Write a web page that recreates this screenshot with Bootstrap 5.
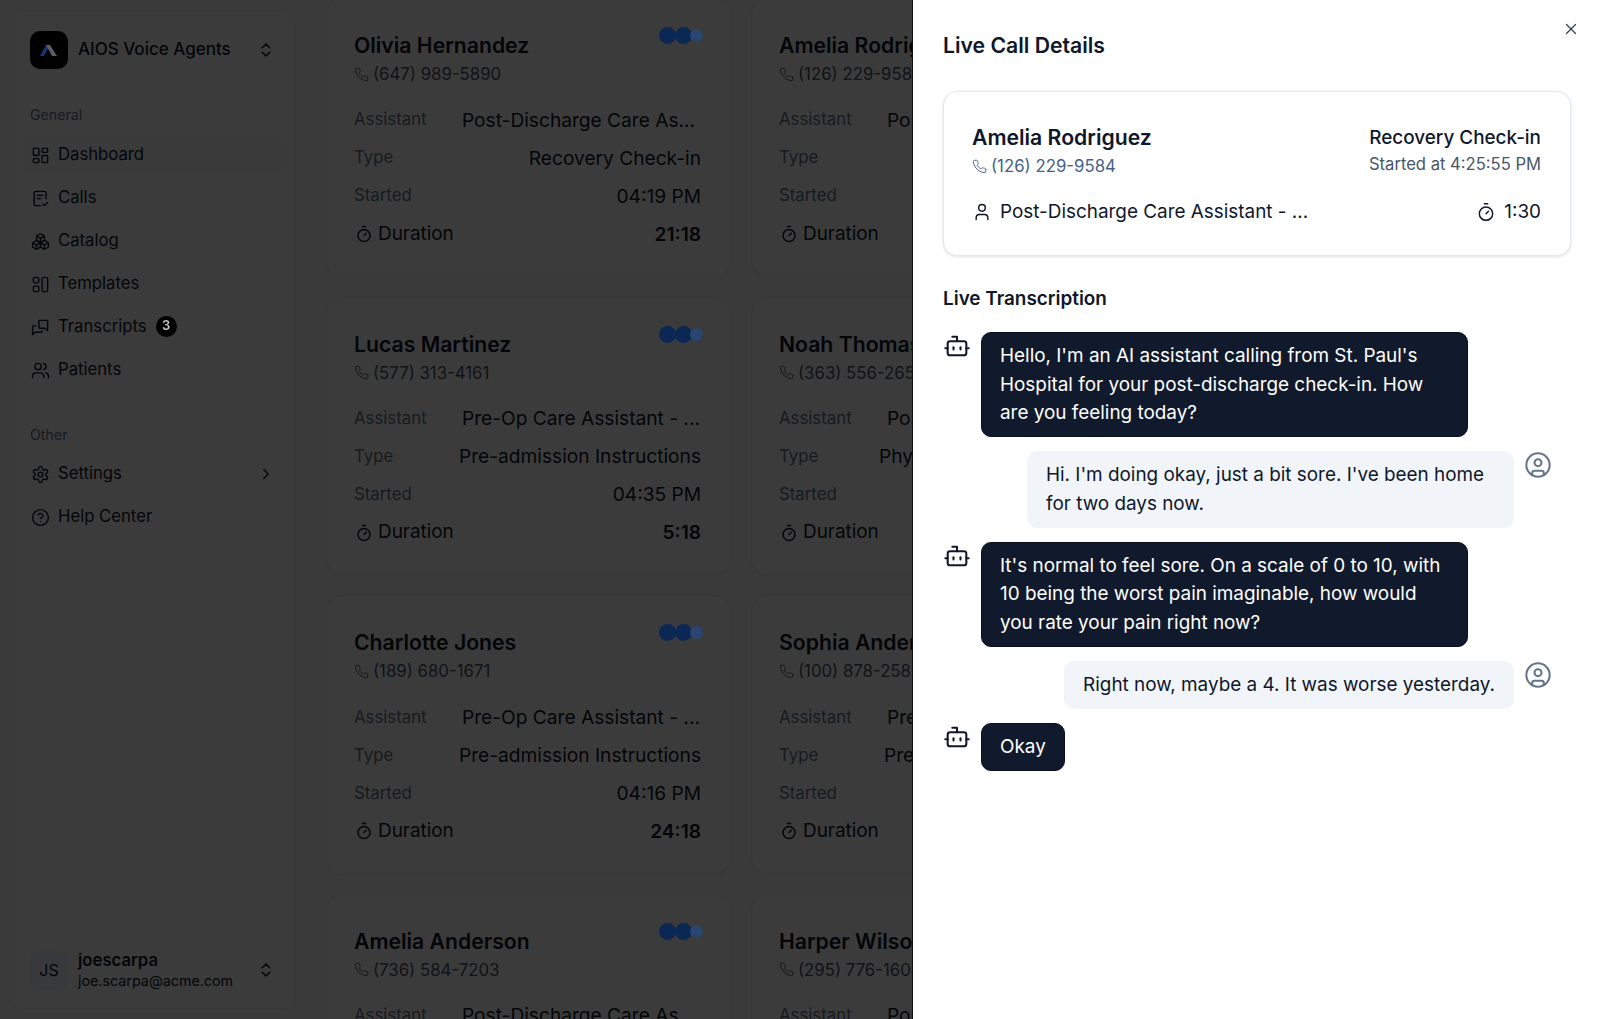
<!DOCTYPE html>
<html lang="en">
<head>
  <meta charset="UTF-8">
  <meta name="viewport" content="width=device-width, initial-scale=1.0">
  <title>AIOS Voice Agents</title>
  <link href="https://cdn.jsdelivr.net/npm/bootstrap@5.3.0/dist/css/bootstrap.min.css" rel="stylesheet">
  <style>
    body {
      font-family: Inter, "Liberation Sans", sans-serif;
      background-color: #fbfbfb;
      color: #0f172a;
      height: 1019px;
      overflow: hidden;
    }
    .ico {
      fill: none;
      stroke: currentColor;
      stroke-width: 2;
      stroke-linecap: round;
      stroke-linejoin: round;
      flex-shrink: 0;
    }
    .page-shell { height: 1019px; overflow: hidden; }
    /* bootstrap adds the backdrop itself when it finds .offcanvas.show on load */
    .offcanvas-backdrop.show { opacity: .77; }
    /* sidebar */
    .side-panel {
      width: 285px;
      height: 999px;
      margin: 10px 0 0 10px;
      padding: 20px 11px 19px 11px;
      background-color: #fff;
      border: 1px solid #e9edf2;
      border-radius: 12px;
      flex-shrink: 0;
    }
    .brand-row { height: 38px; padding: 0 8px 0 8px; }
    .brand-logo {
      width: 38px;
      height: 38px;
      border-radius: 10px;
      background-color: #000;
      position: relative;
      z-index: 1041;
    }
    .brand-name { font-size: 17px; font-weight: 500; margin-left: 10px; }
    .side-label { font-size: 14.2px; color: #64748b; padding-left: 8px; height: 20px; line-height: 20px; }
    .side-item {
      height: 38px;
      margin-bottom: 5px;
      padding: 0 8px 0 9px;
      border-radius: 8px;
      font-size: 16.7px;
      color: #0f172a;
      text-decoration: none;
    }
    .side-item.active-item { background-color: #f8f9fb; }
    .side-item .ico { margin-right: 8px; stroke-width: 1.75; }
    .count-pill {
      width: 21px;
      height: 21px;
      border-radius: 50%;
      background-color: #000;
      color: #c4c4c4;
      font-size: 13px;
      font-weight: 600;
      margin: -2px 0 0 9px;
      position: relative;
      z-index: 1041;
    }
    .user-row { padding: 0 8px 0 8px; height: 38px; }
    .user-avatar { width: 38px; height: 38px; border-radius: 8px; background-color: #f1f5f9; font-size: 16px; }
    .user-info { margin-left: 10px; }
    .user-name { font-size: 16.7px; font-weight: 600; line-height: 20px; }
    .user-mail { font-size: 14.3px; line-height: 21px; }
    /* call cards */
    .call-grid {
      display: grid;
      grid-template-columns: 405px 405px;
      grid-auto-rows: 278.6px;
      gap: 20px;
      margin: -2px 0 0 31px;
    }
    .call-card {
      height: 100%;
      padding: 30px 29px 0 27px;
      border: 1px solid #e9edf2;
      border-radius: 16px;
      box-shadow: 0 1px 3px rgba(15, 23, 42, .08);
    }
    .person-name { font-size: 21.2px; font-weight: 600; line-height: 32px; }
    .phone-line { font-size: 16.8px; line-height: 24px; color: #475569; margin-top: 1px; }
    .phone-line .ico { margin-right: 4px; }
    .pulse-dots { margin: -2px -2px 0 0; }
    .pulse-dots span { display: block; border-radius: 50%; position: relative; z-index: 1041; }
    .dot-a { width: 17px; height: 17px; background-color: #0b2855; }
    .dot-b { width: 17px; height: 17px; background-color: #0b2855; margin-left: -1px; }
    .dot-c { width: 13px; height: 13px; background-color: #2a4670; margin-left: -2px; }
    .data-rows { margin-top: 15px; }
    .data-row { height: 38px; font-size: 19.15px; white-space: nowrap; }
    .data-key { font-size: 16.8px; color: #64748b; }
    .data-key-strong { font-size: 18.9px; color: #0f172a; }
    .data-key-strong .ico { margin: 0 5px 0 1px; }
    .data-bold { font-weight: 600; }
    .assistant-val { width: 239px; }
    /* live details */
    .live-panel.offcanvas {
      --bs-offcanvas-width: 688px;
      border-left: 1px solid #111;
      color: #0f172a;
    }
    .panel-close { position: absolute; top: 20px; right: 20px; color: #334155; line-height: 0; }
    .panel-title { font-size: 21.2px; font-weight: 600; line-height: 28px; margin: 31px 0 32px 30px; }
    .summary-card {
      margin: 0 29px 0 30px;
      height: 165px;
      padding: 31px 29px 0 28px;
      border: 1px solid #e2e8f0;
      border-radius: 14px;
      box-shadow: 0 1px 3px rgba(15, 23, 42, .12);
    }
    .summary-card .person-name { line-height: 30px; margin-top: -1px; }
    .summary-card .phone-line { margin-top: 2px; }
    .summary-type { font-size: 18.9px; font-weight: 500; line-height: 30px; }
    .summary-time { font-size: 16.6px; line-height: 22px; color: #475569; }
    .summary-foot { margin-top: 20px; font-size: 18.9px; line-height: 28px; }
    .phone-blue { color: #475f85; }
    .transcript-title { font-size: 18.9px; font-weight: 600; line-height: 28px; margin: 29px 0 19px 30px; }
    .transcript { padding: 0 48px 0 30px; gap: 14.2px; }
    .msg-row { gap: 10px; }
    .msg-text {
      padding: 9px 18px 8.5px;
      font-size: 18.9px;
      line-height: 28.5px;
      border-radius: 10px;
      border: 1px solid transparent;
    }
    .msg-bot .msg-text { background-color: #111a2c; color: #fff; border-color: #0a0f1a; max-width: 487px; }
    .msg-user .msg-text { background-color: #f1f5f9; max-width: 487px; }
    .msg-user .ico { color: #64748b; }
  </style>
</head>
<body>
  <svg width="0" height="0" class="d-none">
    <symbol id="i-dashboard" viewBox="0 0 24 24"><rect width="7" height="9" x="3" y="3" rx="1"/><rect width="7" height="5" x="14" y="3" rx="1"/><rect width="7" height="9" x="14" y="12" rx="1"/><rect width="7" height="5" x="3" y="16" rx="1"/></symbol>
    <symbol id="i-calls" viewBox="0 0 24 24"><path d="M19 12V5a2 2 0 0 0-2-2H6a2 2 0 0 0-2 2v14a2 2 0 0 0 2 2h6"/><path d="M8 8h7"/><path d="M8 12h4"/><path d="m15 19 2 2 4-4"/></symbol>
    <symbol id="i-boxes" viewBox="0 0 24 24"><path d="M2.97 12.92A2 2 0 0 0 2 14.63v3.24a2 2 0 0 0 .97 1.71l3 1.8a2 2 0 0 0 2.06 0L12 19v-5.5l-5-3-4.03 2.42Z"/><path d="m7 16.5-4.74-2.85"/><path d="m7 16.5 5-3"/><path d="M7 16.5v5.17"/><path d="M12 13.5V19l3.97 2.38a2 2 0 0 0 2.06 0l3-1.8a2 2 0 0 0 .97-1.71v-3.24a2 2 0 0 0-.97-1.71L17 10.5l-5 3Z"/><path d="m17 16.5-5-3"/><path d="m17 16.5 4.74-2.85"/><path d="M17 16.5v5.17"/><path d="M7.97 4.42A2 2 0 0 0 7 6.13v4.37l5 3 5-3V6.13a2 2 0 0 0-.97-1.71l-3-1.8a2 2 0 0 0-2.06 0l-3 1.8Z"/><path d="M12 8 7.26 5.15"/><path d="m12 8 4.74-2.85"/><path d="M12 13.5V8"/></symbol>
    <symbol id="i-templates" viewBox="0 0 24 24"><rect width="7" height="7" x="3" y="3" rx="2"/><rect width="7" height="7" x="3" y="14" rx="2"/><rect width="7" height="18" x="14" y="3" rx="2"/></symbol>
    <symbol id="i-chats" viewBox="0 0 24 24"><path d="M10 4a1 1 0 0 1 1-1h10v13l-3-3h-7a1 1 0 0 1-1-1z"/><path d="M6 10H3a1 1 0 0 0-1 1v10l3-3h8a1 1 0 0 0 1-1v-1"/></symbol>
    <symbol id="i-users" viewBox="0 0 24 24"><path d="M16 21v-2a4 4 0 0 0-4-4H6a4 4 0 0 0-4 4v2"/><circle cx="9" cy="7" r="4"/><path d="M22 21v-2a4 4 0 0 0-3-3.87"/><path d="M16 3.13a4 4 0 0 1 0 7.75"/></symbol>
    <symbol id="i-gear" viewBox="0 0 24 24"><path d="M12.22 2h-.44a2 2 0 0 0-2 2v.18a2 2 0 0 1-1 1.73l-.43.25a2 2 0 0 1-2 0l-.15-.08a2 2 0 0 0-2.73.73l-.22.38a2 2 0 0 0 .73 2.73l.15.1a2 2 0 0 1 1 1.72v.51a2 2 0 0 1-1 1.74l-.15.09a2 2 0 0 0-.73 2.73l.22.38a2 2 0 0 0 2.73.73l.15-.08a2 2 0 0 1 2 0l.43.25a2 2 0 0 1 1 1.73V20a2 2 0 0 0 2 2h.44a2 2 0 0 0 2-2v-.18a2 2 0 0 1 1-1.73l.43-.25a2 2 0 0 1 2 0l.15.08a2 2 0 0 0 2.73-.73l.22-.39a2 2 0 0 0-.73-2.73l-.15-.08a2 2 0 0 1-1-1.74v-.5a2 2 0 0 1 1-1.74l.15-.09a2 2 0 0 0 .73-2.73l-.22-.38a2 2 0 0 0-2.73-.73l-.15.08a2 2 0 0 1-2 0l-.43-.25a2 2 0 0 1-1-1.73V4a2 2 0 0 0-2-2z"/><circle cx="12" cy="12" r="3"/></symbol>
    <symbol id="i-help" viewBox="0 0 24 24"><circle cx="12" cy="12" r="10"/><path d="M9.09 9a3 3 0 0 1 5.83 1c0 2-3 3-3 3"/><path d="M12 17h.01"/></symbol>
    <symbol id="i-updown" viewBox="0 0 24 24"><path d="m7 15 5 5 5-5"/><path d="m7 9 5-5 5 5"/></symbol>
    <symbol id="i-right" viewBox="0 0 24 24"><path d="m9 18 6-6-6-6"/></symbol>
    <symbol id="i-phone" viewBox="0 0 24 24"><path d="M22 16.92v3a2 2 0 0 1-2.18 2 19.79 19.79 0 0 1-8.63-3.07 19.5 19.5 0 0 1-6-6 19.79 19.79 0 0 1-3.07-8.67A2 2 0 0 1 4.11 2h3a2 2 0 0 1 2 1.72 12.84 12.84 0 0 0 .7 2.81 2 2 0 0 1-.45 2.11L8.09 9.91a16 16 0 0 0 6 6l1.27-1.27a2 2 0 0 1 2.11-.45 12.84 12.84 0 0 0 2.81.7A2 2 0 0 1 22 16.92z"/></symbol>
    <symbol id="i-timer" viewBox="0 0 24 24"><line x1="10" x2="14" y1="2" y2="2"/><line x1="12" x2="15" y1="14" y2="11"/><circle cx="12" cy="14" r="8"/></symbol>
    <symbol id="i-user" viewBox="0 0 24 24"><path d="M19 21v-2a4 4 0 0 0-4-4H9a4 4 0 0 0-4 4v2"/><circle cx="12" cy="7" r="4"/></symbol>
    <symbol id="i-bot" viewBox="0 0 24 24"><path d="M12 8V4H8"/><rect width="16" height="12" x="4" y="8" rx="2"/><path d="M2 14h2"/><path d="M20 14h2"/><path d="M15 13v2"/><path d="M9 13v2"/></symbol>
    <symbol id="i-person" viewBox="0 0 24 24"><circle cx="12" cy="12" r="10"/><circle cx="12" cy="10" r="3"/><path d="M7 20.662V19a2 2 0 0 1 2-2h6a2 2 0 0 1 2 2v1.662"/></symbol>
    <symbol id="i-close" viewBox="0 0 24 24"><path d="M18 6 6 18"/><path d="m6 6 12 12"/></symbol>
  </svg>

  <div class="page-shell d-flex">
    <!-- Sidebar -->
    <aside class="side-panel d-flex flex-column">
      <div class="brand-row d-flex align-items-center">
        <div class="brand-logo d-flex align-items-center justify-content-center">
          <svg width="20" height="12" viewBox="0 0 20 12"><path d="M1 12 7 1h4L5 12z" fill="#15356f"/><path d="M7 1h4l7 11h-5z" fill="#5a5f66"/></svg>
        </div>
        <span class="brand-name">AIOS Voice Agents</span>
        <svg class="ico ms-auto" width="18" height="18"><use href="#i-updown"/></svg>
      </div>

      <div class="side-label" style="margin-top: 36px; margin-bottom: 11px;">General</div>
      <a class="side-item active-item d-flex align-items-center" href="#"><svg class="ico" width="19" height="19"><use href="#i-dashboard"/></svg>Dashboard</a>
      <a class="side-item d-flex align-items-center" href="#"><svg class="ico" width="19" height="19"><use href="#i-calls"/></svg>Calls</a>
      <a class="side-item d-flex align-items-center" href="#"><svg class="ico" width="19" height="19"><use href="#i-boxes"/></svg>Catalog</a>
      <a class="side-item d-flex align-items-center" href="#"><svg class="ico" width="19" height="19"><use href="#i-templates"/></svg>Templates</a>
      <a class="side-item d-flex align-items-center" href="#"><svg class="ico" width="19" height="19"><use href="#i-chats"/></svg>Transcripts<span class="count-pill d-flex align-items-center justify-content-center">3</span></a>
      <a class="side-item d-flex align-items-center" href="#"><svg class="ico" width="19" height="19"><use href="#i-users"/></svg>Patients</a>

      <div class="side-label" style="margin-top: 31px; margin-bottom: 10px;">Other</div>
      <a class="side-item d-flex align-items-center" href="#"><svg class="ico" width="19" height="19"><use href="#i-gear"/></svg>Settings<svg class="ico ms-auto" style="margin-right: 0" width="18" height="18"><use href="#i-right"/></svg></a>
      <a class="side-item d-flex align-items-center" href="#"><svg class="ico" width="19" height="19"><use href="#i-help"/></svg>Help Center</a>

      <div class="user-row d-flex align-items-center mt-auto">
        <div class="user-avatar d-flex align-items-center justify-content-center">JS</div>
        <div class="user-info">
          <div class="user-name">joescarpa</div>
          <div class="user-mail">joe.scarpa@acme.com</div>
        </div>
        <svg class="ico ms-auto" width="18" height="18"><use href="#i-updown"/></svg>
      </div>
    </aside>

    <!-- Call cards, filled from the list below -->
    <main id="callGrid" class="call-grid"></main>
  </div>

  <!-- Live call details -->
  <div class="offcanvas offcanvas-end show live-panel">
    <a class="panel-close" href="#"><svg class="ico" width="18" height="18" style="stroke-width: 1.75"><use href="#i-close"/></svg></a>
    <div class="panel-title">Live Call Details</div>

    <div class="summary-card card flex-shrink-0">
      <div class="d-flex justify-content-between">
        <div>
          <div class="person-name">Amelia Rodriguez</div>
          <div class="phone-line phone-blue d-flex align-items-center"><svg class="ico" width="15" height="15" style="stroke-width: 1.5"><use href="#i-phone"/></svg>(126) 229-9584</div>
        </div>
        <div class="text-end">
          <div class="summary-type">Recovery Check-in</div>
          <div class="summary-time">Started at 4:25:55 PM</div>
        </div>
      </div>
      <div class="summary-foot d-flex justify-content-between align-items-center">
        <div class="d-flex align-items-center"><svg class="ico me-2" width="20" height="20" style="stroke-width: 1.75"><use href="#i-user"/></svg>Post-Discharge Care Assistant - ...</div>
        <div class="d-flex align-items-center"><svg class="ico me-2" width="20" height="20" style="stroke-width: 1.75"><use href="#i-timer"/></svg>1:30</div>
      </div>
    </div>

    <div class="transcript-title">Live Transcription</div>
    <div class="transcript d-flex flex-column">
      <div class="msg-row msg-bot d-flex">
        <svg class="ico" width="28" height="28" style="stroke-width: 1.75"><use href="#i-bot"/></svg>
        <div class="msg-text">Hello, I'm an AI assistant calling from St. Paul's Hospital for your post-discharge check-in. How are you feeling today?</div>
      </div>
      <div class="msg-row msg-user d-flex justify-content-end">
        <div class="msg-text">Hi. I'm doing okay, just a bit sore. I've been home for two days now.</div>
        <svg class="ico" width="28" height="28" style="stroke-width: 1.75"><use href="#i-person"/></svg>
      </div>
      <div class="msg-row msg-bot d-flex">
        <svg class="ico" width="28" height="28" style="stroke-width: 1.75"><use href="#i-bot"/></svg>
        <div class="msg-text">It's normal to feel sore. On a scale of 0 to 10, with 10 being the worst pain imaginable, how would you rate your pain right now?</div>
      </div>
      <div class="msg-row msg-user d-flex justify-content-end">
        <div class="msg-text">Right now, maybe a 4. It was worse yesterday.</div>
        <svg class="ico" width="28" height="28" style="stroke-width: 1.75"><use href="#i-person"/></svg>
      </div>
      <div class="msg-row msg-bot d-flex">
        <svg class="ico" width="28" height="28" style="stroke-width: 1.75"><use href="#i-bot"/></svg>
        <div class="msg-text">Okay</div>
      </div>
    </div>
  </div>

  <script src="https://cdn.jsdelivr.net/npm/bootstrap@5.3.0/dist/js/bootstrap.bundle.min.js"></script>
  <script>
    const postCare = 'Post-Discharge Care As...';
    const preCare = 'Pre-Op Care Assistant - ...';
    const recovery = 'Recovery Check-in';
    const preAdmit = 'Pre-admission Instructions';

    const calls = [
      { name: 'Olivia Hernandez', phone: '(647) 989-5890', assistant: postCare, type: recovery, started: '04:19 PM', duration: '21:18' },
      { name: 'Amelia Rodriguez', phone: '(126) 229-9584', assistant: postCare, type: recovery, started: '04:25 PM', duration: '1:30' },
      { name: 'Lucas Martinez', phone: '(577) 313-4161', assistant: preCare, type: preAdmit, started: '04:35 PM', duration: '5:18' },
      { name: 'Noah Thomas', phone: '(363) 556-2650', assistant: postCare, type: 'Physical Therapy Reminder', started: '04:22 PM', duration: '9:18' },
      { name: 'Charlotte Jones', phone: '(189) 680-1671', assistant: preCare, type: preAdmit, started: '04:16 PM', duration: '24:18' },
      { name: 'Sophia Anderson', phone: '(100) 878-2581', assistant: preCare, type: preAdmit, started: '04:28 PM', duration: '12:18' },
      { name: 'Amelia Anderson', phone: '(736) 584-7203', assistant: postCare, type: recovery, started: '04:31 PM', duration: '8:18' },
      { name: 'Harper Wilson', phone: '(295) 776-1604', assistant: postCare, type: recovery, started: '04:33 PM', duration: '6:18' },
    ];

    document.getElementById('callGrid').innerHTML = calls.map(call => `
      <div class="call-card card">
        <div class="d-flex justify-content-between">
          <div>
            <div class="person-name">${call.name}</div>
            <div class="phone-line d-flex align-items-center"><svg class="ico" width="15" height="15" style="stroke-width: 1.5"><use href="#i-phone"/></svg>${call.phone}</div>
          </div>
          <div class="pulse-dots d-flex align-items-center align-self-start">
            <span class="dot-a"></span><span class="dot-b"></span><span class="dot-c"></span>
          </div>
        </div>
        <div class="data-rows">
          <div class="data-row d-flex justify-content-between align-items-center"><span class="data-key">Assistant</span><span class="assistant-val">${call.assistant}</span></div>
          <div class="data-row d-flex justify-content-between align-items-center"><span class="data-key">Type</span><span>${call.type}</span></div>
          <div class="data-row d-flex justify-content-between align-items-center"><span class="data-key">Started</span><span>${call.started}</span></div>
          <div class="data-row d-flex justify-content-between align-items-center"><span class="data-key-strong d-flex align-items-center"><svg class="ico" width="18" height="18"><use href="#i-timer"/></svg>Duration</span><span class="data-bold">${call.duration}</span></div>
        </div>
      </div>`).join('');
  </script>
</body>
</html>
